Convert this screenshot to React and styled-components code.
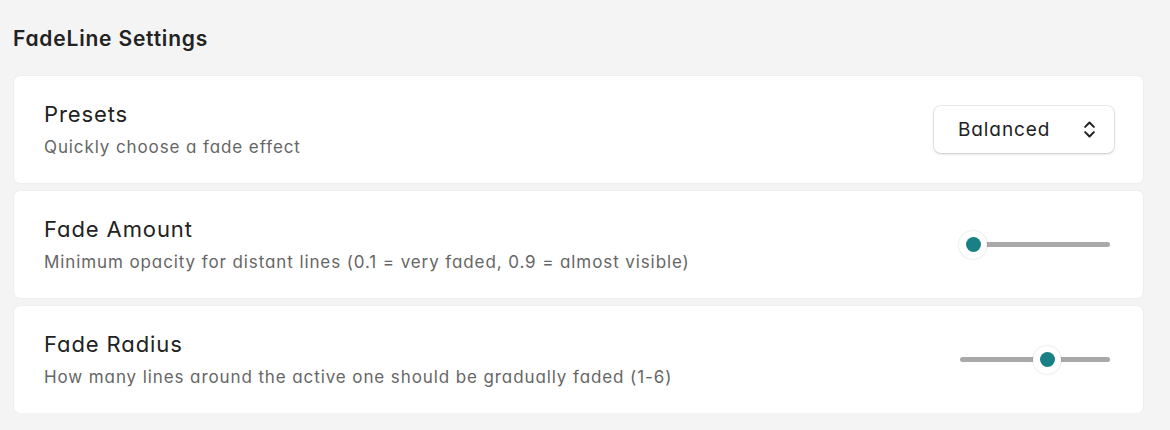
import React from "react";
import styled, { createGlobalStyle } from "styled-components";
import { ChevronsUpDown } from "lucide-react";

const Global = createGlobalStyle`
  html, body { margin: 0; padding: 0; background: #f4f4f4; }
  body {
    font-family: Inter, "Noto Sans", sans-serif;
    font-feature-settings: "cv11" 1;
    color: #222;
  }
`;

const Page = styled.div`
  padding: 24px 27px 0 14px;
`;

const Heading = styled.h1`
  margin: 0 0 0 -1px;
  font-size: 21px;
  line-height: 30px;
  font-weight: 600;
  letter-spacing: 0.8px;
  color: #222;
`;

const List = styled.div`
  margin-top: 22px;
  display: flex;
  flex-direction: column;
  gap: 8px;
`;

const Card = styled.div`
  background: #fff;
  border-radius: 6px;
  box-shadow: 0 0 0 1px #eeeeee;
  height: 107px;
  box-sizing: border-box;
  padding: 0 30px;
  display: flex;
  align-items: center;
  justify-content: space-between;
`;

const Text = styled.div`
  display: flex;
  flex-direction: column;
  gap: 8px;
  margin-top: -2px;
`;

const Title = styled.div`
  font-size: 22px;
  line-height: 28px;
  font-weight: 400;
  letter-spacing: 0.9px;
  color: #222;
`;

const Sub = styled.div`
  font-size: 17px;
  line-height: 22px;
  letter-spacing: 0.9px;
  color: #666;
`;

const Select = styled.div`
  width: 180px;
  height: 47px;
  box-sizing: border-box;
  margin-right: -1px;
  border-radius: 7px;
  background: #fff;
  box-shadow: 0 1px 3px rgba(0, 0, 0, 0.18), 0 0 0 1px #f0f0f0;
  display: flex;
  align-items: center;
  justify-content: space-between;
  padding: 0 14px 0 24px;
  font-size: 19px;
  letter-spacing: 0.9px;
  color: #222;
`;

const Slider = styled.div`
  position: relative;
  width: 150px;
  height: 28px;
  margin-right: 3px;
  display: flex;
  align-items: center;
`;

const Track = styled.div`
  width: 100%;
  height: 5px;
  border-radius: 3px;
  background: #a9a9a9;
`;

const Thumb = styled.div`
  position: absolute;
  top: 0;
  width: 28px;
  height: 28px;
  margin-left: -14px;
  border-radius: 50%;
  background: #fff;
  box-shadow: 0 0 2px rgba(0, 0, 0, 0.2);
  display: flex;
  align-items: center;
  justify-content: center;
  &::after {
    content: "";
    width: 15px;
    height: 15px;
    border-radius: 50%;
    background: #1b7f86;
  }
`;

function RangeSlider({ min, max, value }) {
  const frac = (value - min) / (max - min);
  const left = 13 + frac * (150 - 26);
  return (
    <Slider>
      <Track />
      <Thumb style={{ left: `${left}px` }} />
    </Slider>
  );
}

export default function App() {
  return (
    <>
      <Global />
      <Page>
        <Heading>FadeLine Settings</Heading>
        <List>
          <Card>
            <Text>
              <Title>Presets</Title>
              <Sub>Quickly choose a fade effect</Sub>
            </Text>
            <Select>
              <span>Balanced</span>
              <ChevronsUpDown size={21} strokeWidth={2.3} color="#222" />
            </Select>
          </Card>
          <Card>
            <Text>
              <Title>Fade Amount</Title>
              <Sub>Minimum opacity for distant lines (0.1 = very faded, 0.9 = almost visible)</Sub>
            </Text>
            <RangeSlider min={0.1} max={0.9} value={0.1} />
          </Card>
          <Card>
            <Text>
              <Title>Fade Radius</Title>
              <Sub>How many lines around the active one should be gradually faded (1-6)</Sub>
            </Text>
            <RangeSlider min={1} max={6} value={4} />
          </Card>
        </List>
      </Page>
    </>
  );
}
